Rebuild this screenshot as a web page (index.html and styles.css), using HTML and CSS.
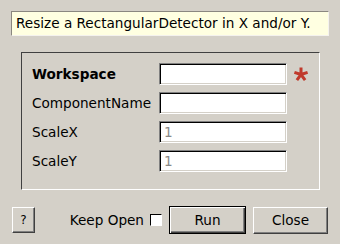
FILE: index.html
```html
<!DOCTYPE html>
<html>
<head>
<meta charset="utf-8">
<link rel="stylesheet" href="styles.css">
</head>
<body>
<div class="dialog">
  <div class="desc">Resize a RectangularDetector in X and/or Y.</div>
  <div class="group">
    <div class="row">
      <span class="label bold">Workspace</span>
      <span class="input"></span>
      <svg class="star" width="16" height="16" viewBox="0 0 16 16"><path d="M8 8.5 L8 1.5 M8 8.5 L14.6 6.3 M8 8.5 L12.1 14.2 M8 8.5 L3.9 14.2 M8 8.5 L1.4 6.3" stroke="#c0392b" stroke-width="3" stroke-linecap="butt" fill="none"/></svg>
    </div>
    <div class="row">
      <span class="label">ComponentName</span>
      <span class="input"></span>
    </div>
    <div class="row">
      <span class="label">ScaleX</span>
      <span class="input"><span class="ph">1</span></span>
    </div>
    <div class="row">
      <span class="label">ScaleY</span>
      <span class="input"><span class="ph">1</span></span>
    </div>
  </div>
  <div class="buttons">
    <span class="btn help">?</span>
    <span class="spacer"></span>
    <span class="keep">Keep Open</span>
    <span class="check"></span>
    <span class="btn run">Run</span>
    <span class="btn close">Close</span>
  </div>
</div>
</body>
</html>
```
FILE: styles.css
```css
html, body {
  margin: 0;
  padding: 0;
  background: #d4d0c8;
  font-family: "DejaVu Sans", sans-serif;
  font-size: 13.6px;
  color: #000;
}
.dialog {
  width: 340px;
  height: 244px;
  padding-top: 11px;
  box-sizing: border-box;
}
.desc {
  margin: 0 11px;
  height: 25px;
  box-sizing: border-box;
  background: #ffffe1;
  border: 1px solid;
  border-color: #8a8780 #f4f2ee #f4f2ee #8a8780;
  padding-left: 4px;
  line-height: 23px;
  white-space: nowrap;
}
.group {
  margin: 16px 0 0 21px;
  width: 299px;
  height: 138px;
  box-sizing: border-box;
  border: 1px solid;
  border-color: #404040 #fff #fff #404040;
  padding: 10px 0 0 10px;
  display: flex;
  flex-direction: column;
  gap: 7px;
}
.row {
  display: flex;
  align-items: center;
  height: 22px;
}
.label {
  width: 127px;
  white-space: nowrap;
}
.bold { font-weight: bold; }
.input {
  width: 128px;
  height: 22px;
  box-sizing: border-box;
  background: #fff;
  border: 1px solid;
  border-color: #808080 #fff #fff #808080;
  box-shadow: inset 1px 1px 0 #000, inset -1px -1px 0 #d4d0c8;
  padding-left: 4px;
  line-height: 20px;
}
.ph { color: #8a8a8a; }
.star { margin-left: 6px; }
.buttons {
  display: flex;
  align-items: center;
  margin-top: 16px;
  padding: 0 12px;
  height: 28px;
}
.btn {
  box-sizing: border-box;
  display: flex;
  align-items: center;
  justify-content: center;
  background: #d4d0c8;
  border: 1px solid;
  border-color: #fff #404040 #404040 #fff;
  box-shadow: inset -1px -1px 0 #808080;
}
.help { width: 23px; height: 26px; font-size: 12px; }
.spacer { flex: 1; }
.keep { margin-right: 6px; }
.check {
  width: 12px;
  height: 12px;
  box-sizing: border-box;
  background: #fff;
  border: 1px solid;
  border-color: #000 #fff #fff #000;
  margin-right: 7px;
}
.run {
  width: 77px;
  height: 28px;
  border-color: #000;
  box-shadow: inset 1px 1px 0 #fff, inset -1px -1px 0 #404040, inset -2px -2px 0 #808080;
}
.close {
  width: 75px;
  height: 27px;
  margin-left: 7px;
}
```
